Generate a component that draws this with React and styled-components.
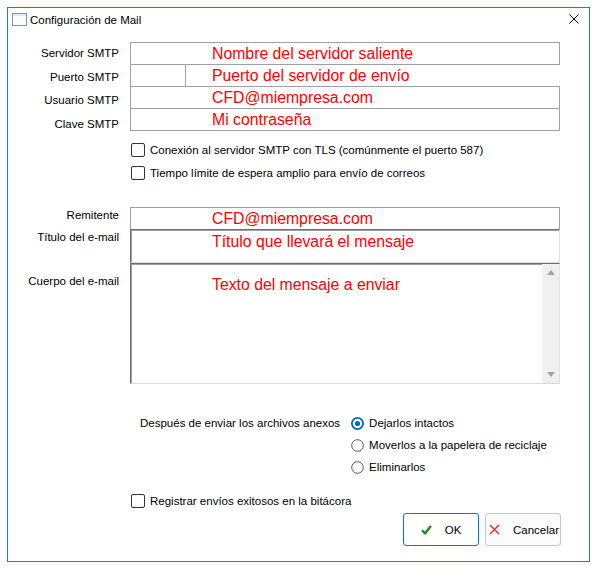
import React from 'react'
import styled, { createGlobalStyle } from 'styled-components'

const GlobalStyle = createGlobalStyle`
  html, body { margin: 0; padding: 0; background: #fff; }
  body {
    font-family: "Liberation Sans", Arial, sans-serif;
    font-size: 11.5px;
    color: #000;
  }
`

const Window = styled.div`
  box-sizing: border-box;
  margin: 7px 0 0 7px;
  width: 583px;
  height: 555px;
  border: 1px solid #1a7fd4;
  background: #fff;
  display: flex;
  flex-direction: column;
`

const TitleBar = styled.div`
  height: 22px;
  display: flex;
  align-items: center;
  padding: 0 10px 0 4px;
`

const TitleText = styled.span`
  flex: 1;
  margin: 2px 0 0 3px;
`

const Content = styled.div`
  display: flex;
  flex-direction: column;
  padding: 12px 28px 0 0;
`

const Row = styled.div`
  display: grid;
  grid-template-columns: 111px 430px;
  column-gap: 11px;
  margin-top: ${p => p.$mt || 0}px;
`

const Label = styled.div`
  text-align: right;
  line-height: 14px;
  padding-top: ${p => p.$pt || 0}px;
  white-space: nowrap;
`

const Field = styled.div`
  box-sizing: border-box;
  height: ${p => p.$h || 23}px;
  border: 1px solid #a0a0a0;
  color: #ff0000;
  font-size: 15.8px;
  line-height: 21px;
  padding-left: 81px;
  white-space: nowrap;
`

const SunkenField = styled.div`
  box-sizing: border-box;
  height: ${p => p.$h}px;
  border-style: solid;
  border-width: 1px;
  border-color: #6d6d6d #e3e3e3 #dadada #6d6d6d;
  box-shadow: inset 1px 1px 0 #a0a0a0;
  display: flex;
  color: #ff0000;
  font-size: 15.8px;
  line-height: 21px;
`

const FieldText = styled.div`
  flex: 1;
  padding: ${p => p.$pt || 0}px 0 0 81px;
  white-space: nowrap;
`

const PortField = styled.div`
  height: 23px;
  display: flex;
  color: #ff0000;
  font-size: 15.8px;
  line-height: 21px;
`

const PortBox = styled.div`
  box-sizing: border-box;
  width: 56px;
  height: 23px;
  border: 1px solid #a0a0a0;
`

const PortHint = styled.span`
  margin-left: 26px;
  padding-top: 1px;
`

const Scrollbar = styled.div`
  width: 17px;
  background: #f0f0f0;
  display: flex;
  flex-direction: column;
  justify-content: space-between;
`

const ScrollArrow = styled.div`
  height: 17px;
  display: flex;
  align-items: center;
  justify-content: center;
`

const CheckRow = styled.label`
  display: flex;
  align-items: center;
  gap: 5px;
  height: 23px;
  margin-left: ${p => p.$ml || 123}px;
  margin-top: ${p => p.$mt || 0}px;
  white-space: nowrap;
`

const CheckBox = styled.span`
  box-sizing: border-box;
  width: 14px;
  height: 14px;
  border: 1px solid #333;
  border-radius: 2px;
  background: #fff;
  flex: none;
`

const AttachSection = styled.div`
  display: flex;
  margin: 28px 0 0 132px;
`

const AttachLabel = styled.div`
  height: 22px;
  line-height: 22px;
  margin-right: 11px;
  white-space: nowrap;
`

const RadioGroup = styled.div`
  display: flex;
  flex-direction: column;
`

const RadioRow = styled.label`
  display: flex;
  align-items: center;
  gap: 5px;
  height: 22px;
  white-space: nowrap;
`

const ButtonBar = styled.div`
  display: flex;
  justify-content: flex-end;
  gap: 6px;
  margin-top: 1px;
`

const Button = styled.button`
  box-sizing: border-box;
  width: 76px;
  height: 33px;
  border: 1px solid ${p => (p.$primary ? '#0078d7' : '#c8c8c8')};
  border-radius: 3px;
  background: ${p => (p.$primary ? '#fff' : '#fbfbfb')};
  font: inherit;
  color: #000;
  display: flex;
  align-items: center;
  justify-content: ${p => (p.$primary ? 'center' : 'flex-start')};
  gap: 13px;
  padding: 0 0 0 ${p => (p.$primary ? 0 : 3)}px;
`

const WindowIcon = () => (
  <svg width="15" height="13" viewBox="0 0 15 13">
    <rect x="0.5" y="0.5" width="14" height="12" fill="#fbfbfb" stroke="#7d95b5" />
    <line x1="1" y1="2" x2="14" y2="2" stroke="#c9d6e6" />
  </svg>
)

const CloseIcon = () => (
  <svg width="10" height="10" viewBox="0 0 10 10">
    <path d="M0.5 0.5 L9.5 9.5 M9.5 0.5 L0.5 9.5" stroke="#000" strokeWidth="1" />
  </svg>
)

const Radio = ({ checked }) => (
  <svg width="13" height="13" viewBox="0 0 13 13">
    {checked ? (
      <>
        <circle cx="6.5" cy="6.5" r="5.6" fill="#fff" stroke="#0067c0" strokeWidth="1.8" />
        <circle cx="6.5" cy="6.5" r="2.6" fill="#0067c0" />
      </>
    ) : (
      <circle cx="6.5" cy="6.5" r="5.8" fill="#fff" stroke="#555" strokeWidth="1" />
    )}
  </svg>
)

const CheckIcon = () => (
  <svg width="11" height="10" viewBox="0 0 11 10">
    <path d="M1 5.2 L4 8.3 L10 1" fill="none" stroke="#168a16" strokeWidth="2.2" />
  </svg>
)

const CrossIcon = () => (
  <svg width="11" height="11" viewBox="0 0 11 11">
    <path d="M1 1 L10 10 M10 1 L1 10" stroke="#e3392b" strokeWidth="1.5" />
  </svg>
)

const Triangle = ({ up }) => (
  <svg width="8" height="5" viewBox="0 0 8 5">
    <path d={up ? 'M0 5 L4 0 L8 5 Z' : 'M0 0 L4 5 L8 0 Z'} fill="#a3a3a3" />
  </svg>
)

export default function App() {
  return (
    <>
      <GlobalStyle />
      <Window>
        <TitleBar>
          <WindowIcon />
          <TitleText>Configuración de Mail</TitleText>
          <CloseIcon />
        </TitleBar>

        <Content>
          <Row>
            <Label $pt={4}>Servidor SMTP</Label>
            <Field>Nombre del servidor saliente</Field>
          </Row>
          <Row $mt={-1}>
            <Label $pt={6}>Puerto SMTP</Label>
            <PortField>
              <PortBox />
              <PortHint>Puerto del servidor de envío</PortHint>
            </PortField>
          </Row>
          <Row $mt={-1}>
            <Label $pt={7}>Usuario SMTP</Label>
            <Field>CFD@miempresa.com</Field>
          </Row>
          <Row $mt={-1}>
            <Label $pt={9}>Clave SMTP</Label>
            <Field>Mi contraseña</Field>
          </Row>

          <CheckRow $mt={7}>
            <CheckBox />
            Conexión al servidor SMTP con TLS (comúnmente el puerto 587)
          </CheckRow>
          <CheckRow>
            <CheckBox />
            Tiempo límite de espera amplio para envío de correos
          </CheckRow>

          <Row $mt={23}>
            <Label $pt={1}>Remitente</Label>
            <Field>CFD@miempresa.com</Field>
          </Row>
          <Row $mt={-1}>
            <Label $pt={1}>Título del e-mail</Label>
            <SunkenField $h={34}>
              <FieldText $pt={1}>Título que llevará el mensaje</FieldText>
            </SunkenField>
          </Row>
          <Row>
            <Label $pt={11}>Cuerpo del e-mail</Label>
            <SunkenField $h={121}>
              <FieldText $pt={10}>Texto del mensaje a enviar</FieldText>
              <Scrollbar>
                <ScrollArrow><Triangle up /></ScrollArrow>
                <ScrollArrow><Triangle /></ScrollArrow>
              </Scrollbar>
            </SunkenField>
          </Row>

          <AttachSection>
            <AttachLabel>Después de enviar los archivos anexos</AttachLabel>
            <RadioGroup>
              <RadioRow><Radio checked />Dejarlos intactos</RadioRow>
              <RadioRow><Radio />Moverlos a la papelera de reciclaje</RadioRow>
              <RadioRow><Radio />Eliminarlos</RadioRow>
            </RadioGroup>
          </AttachSection>

          <CheckRow $mt={11}>
            <CheckBox />
            Registrar envíos exitosos en la bitácora
          </CheckRow>

          <ButtonBar>
            <Button $primary>
              <CheckIcon />
              OK
            </Button>
            <Button>
              <CrossIcon />
              Cancelar
            </Button>
          </ButtonBar>
        </Content>
      </Window>
    </>
  )
}
